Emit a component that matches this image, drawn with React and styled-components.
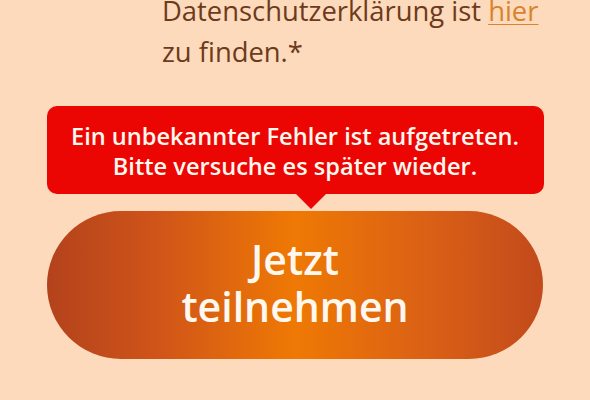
import React from "react";
import styled, { createGlobalStyle } from "styled-components";

const GlobalStyle = createGlobalStyle`
  html, body {
    margin: 0;
    padding: 0;
    background: #fcdabb;
  }
  body {
    font-family: "Open Sans", "Lato", sans-serif;
    overflow: hidden;
  }
`;

const Page = styled.div`
  width: 590px;
  height: 400px;
  display: flex;
  flex-direction: column;
  align-items: center;
`;

const Consent = styled.p`
  align-self: stretch;
  margin: -10px 0 0 162px;
  font-size: 27.4px;
  line-height: 41px;
  color: #6d3a1b;
`;

const Link = styled.a`
  color: #d8832f;
  text-decoration: underline;
  text-decoration-thickness: 1px;
  text-underline-offset: 3px;
`;

const Tooltip = styled.div`
  position: relative;
  width: 497px;
  box-sizing: border-box;
  margin-top: 34px;
  padding: 15px 10px 13px;
  background: #eb0603;
  border-radius: 10px;
  color: #fff8ef;
  font-weight: 600;
  font-size: 23.6px;
  line-height: 30px;
  text-align: center;

  &::after {
    content: "";
    position: absolute;
    left: calc(50% + 16px);
    bottom: -15px;
    margin-left: -15px;
    border-left: 15px solid transparent;
    border-right: 15px solid transparent;
    border-top: 15px solid #eb0603;
  }
`;

const Button = styled.button`
  margin-top: 17px;
  width: 496px;
  height: 148px;
  display: flex;
  align-items: center;
  justify-content: center;
  border: none;
  border-radius: 74px;
  background: linear-gradient(
    90deg,
    #b3421c 0%,
    #cf5419 22%,
    #ef7904 50%,
    #d95f16 78%,
    #c24a1b 100%
  );
  color: #fff8ef;
  font-family: "Open Sans", "Lato", sans-serif;
  font-weight: 600;
  font-size: 41px;
  line-height: 47px;
  padding: 0 0 5px;
`;

export default function App() {
  return (
    <>
      <GlobalStyle />
      <Page>
        <Consent>
          Datenschutzerklärung ist <Link href="#">hier</Link>
          <br />
          zu finden.*
        </Consent>
        <Tooltip>
          Ein unbekannter Fehler ist aufgetreten.
          <br />
          Bitte versuche es später wieder.
        </Tooltip>
        <Button>
          Jetzt
          <br />
          teilnehmen
        </Button>
      </Page>
    </>
  );
}
